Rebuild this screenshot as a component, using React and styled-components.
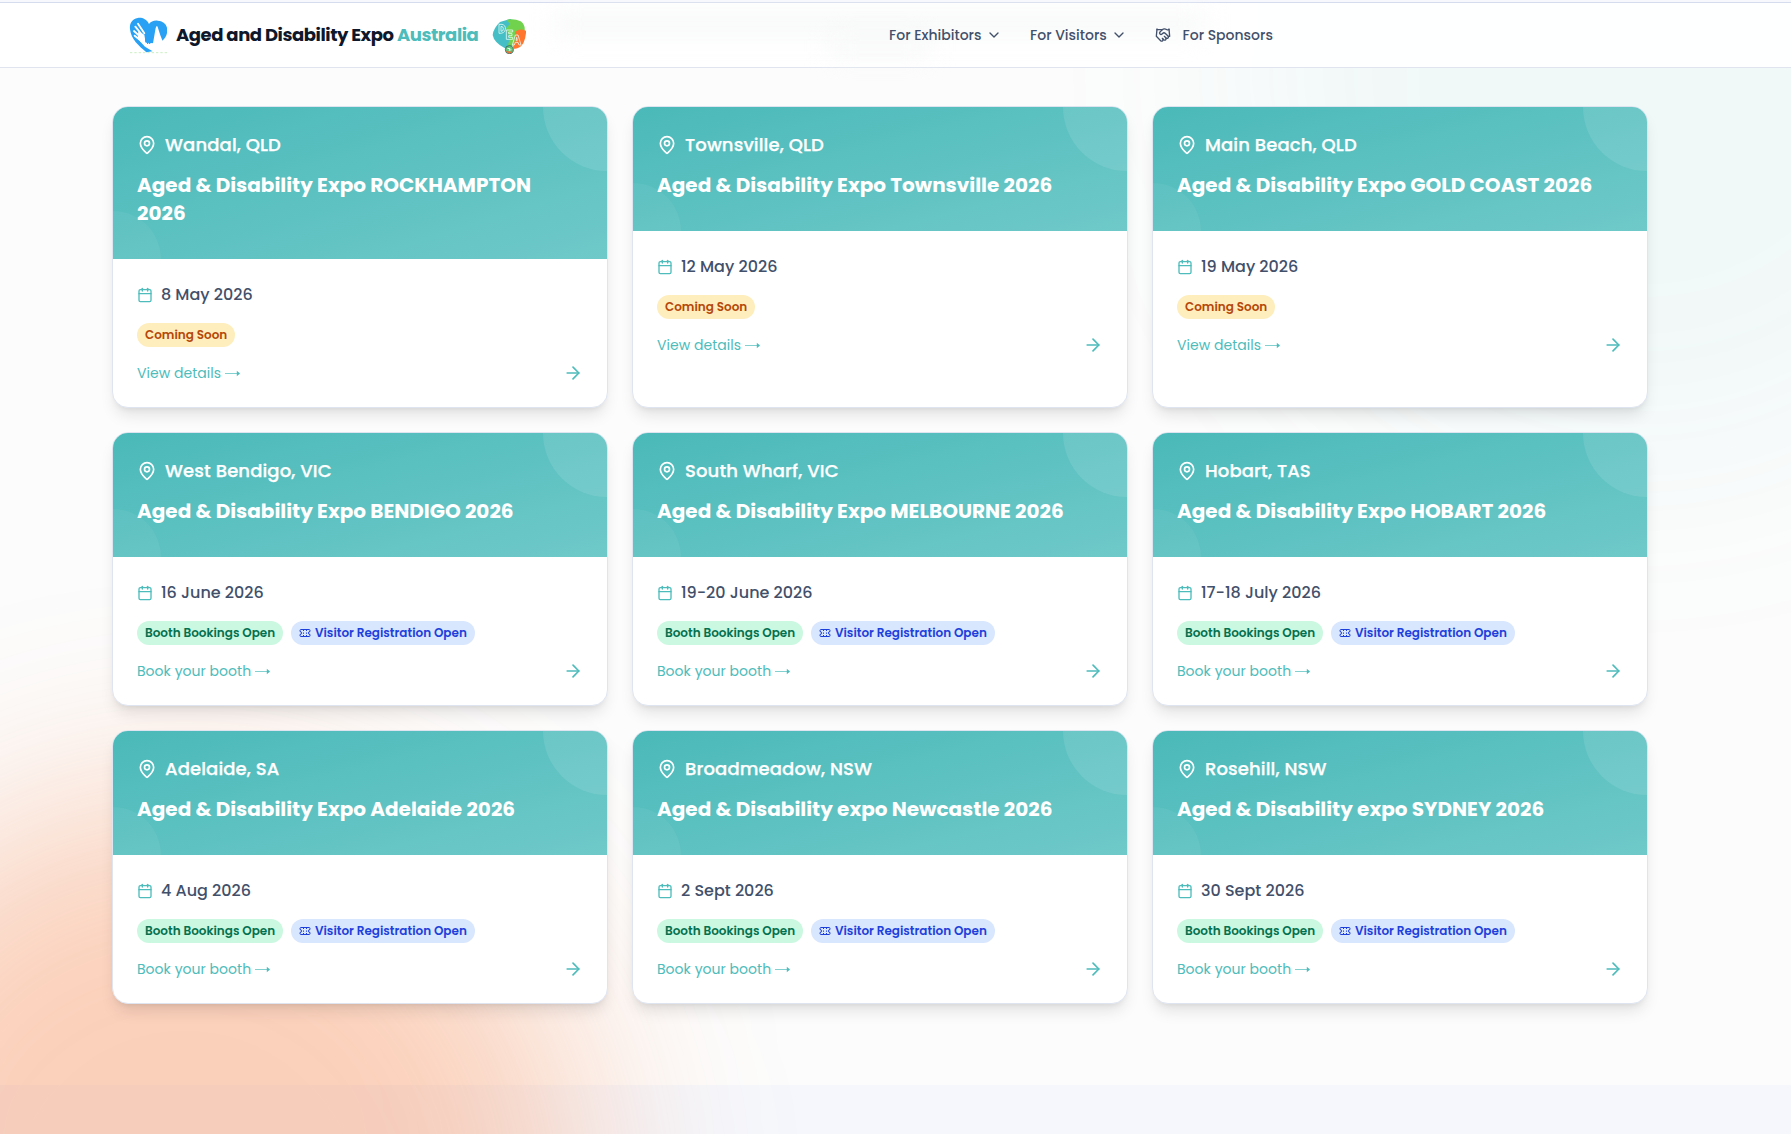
import React from 'react';
import styled, { createGlobalStyle } from 'styled-components';
import { MapPin, Calendar, ArrowRight, ChevronDown, Handshake } from 'lucide-react';

const Global = createGlobalStyle`
  *, *::before, *::after { box-sizing: border-box; }
  html, body { margin: 0; height: 100%; overflow: hidden; }
  body { font-family: Poppins, Inter, "Liberation Sans", sans-serif; background: #fcfcfd; color: #0f172a; }
  h3, p { margin: 0; }
`;

const Page = styled.div`
  position: relative;
  height: 1134px;
  overflow: hidden;
  display: flex;
  flex-direction: column;
  background: #fcfcfc;
`;

const Glow = styled.div`
  position: absolute;
  border-radius: 50%;
  left: ${p => p.$x}px;
  top: ${p => p.$y}px;
  width: 800px;
  height: 800px;
  background: ${p => p.$fill};
  filter: blur(100px);
`;

const TopStrip = styled.div`
  position: relative;
  height: 3px;
  background: #f7f8fe;
  border-bottom: 1px solid #d5dcee;
`;

const Header = styled.header`
  position: relative;
  height: 65px;
  flex: none;
  border-bottom: 1px solid #dfe4ee;
  background: rgba(255, 255, 255, 0.9);
  display: flex;
  align-items: center;
  padding-left: 129px;
`;

const Smudge = styled.div`
  position: absolute;
  left: ${p => p.$x}px;
  top: ${p => p.$y}px;
  width: ${p => p.$w}px;
  height: ${p => p.$h}px;
  background: #f7f8f8;
  filter: blur(12px);
`;

const Brand = styled.div`
  position: relative;
  display: flex;
  align-items: center;
  width: 760px;
`;

const BrandName = styled.span`
  margin-left: 9px;
  width: 316px;
  font-size: 18px;
  line-height: 28px;
  font-weight: 700;
  letter-spacing: -0.45px;
  white-space: nowrap;
  color: #0f172a;
  em { font-style: normal; color: #4dbcbb; }
`;

const Nav = styled.nav`
  position: relative;
  display: flex;
  align-items: center;
  gap: 28px;
`;

const NavItem = styled.a`
  display: flex;
  align-items: center;
  gap: ${p => p.$gap}px;
  font-size: 14px;
  line-height: 20px;
  font-weight: 500;
  color: #42506a;
  white-space: nowrap;
`;

const NavText = styled.span`
  width: ${p => p.$w}px;
`;

const Main = styled.main`
  position: relative;
  z-index: 1;
  flex: 1;
  padding: 38px 0 0 112px;
`;

const Grid = styled.div`
  display: grid;
  grid-template-columns: repeat(3, 1fr);
  gap: 24px;
  width: 1536px;
`;

const Card = styled.article`
  display: flex;
  flex-direction: column;
  border: 1px solid #dfe5f0;
  border-radius: 16px;
  overflow: hidden;
  background: #fff;
  box-shadow: 0 10px 15px -3px rgba(0, 0, 0, 0.1), 0 4px 6px -4px rgba(0, 0, 0, 0.1);
`;

const CardHead = styled.div`
  position: relative;
  overflow: hidden;
  padding: 24px 24px 32px;
  background: linear-gradient(to bottom right, #4bb9b9, #6fc9c9);
  color: #fff;
  &::before {
    content: '';
    position: absolute;
    right: -64px;
    top: -64px;
    width: 128px;
    height: 128px;
    border-radius: 50%;
    background: rgba(255, 255, 255, 0.1);
  }
  &::after {
    content: '';
    position: absolute;
    left: -48px;
    bottom: -48px;
    width: 96px;
    height: 96px;
    border-radius: 50%;
    background: rgba(255, 255, 255, 0.05);
  }
`;

const Place = styled.div`
  display: flex;
  align-items: center;
  gap: 8px;
  font-size: 18px;
  line-height: 28px;
  font-weight: 500;
  letter-spacing: 0.12px;
  -webkit-text-stroke: 0.25px #fff;
`;

const Title = styled.h3`
  margin-top: 12px;
  font-size: 20px;
  line-height: 28px;
  font-weight: 700;
`;

const CardBody = styled.div`
  padding: 24px;
`;

const DateRow = styled.div`
  display: flex;
  align-items: center;
  gap: 8px;
  font-size: 16px;
  line-height: 24px;
  font-weight: 500;
  color: #42506a;
  svg { color: #4dbcbb; }
`;

const Tags = styled.div`
  display: flex;
  gap: 8px;
  margin-top: 16px;
`;

const tones = {
  soon: ['#feeebd', '#b54708'],
  booth: ['#cbf8e0', '#05704f'],
  visitor: ['#d8e6fe', '#1d3fdb'],
};

const Tag = styled.span`
  display: inline-flex;
  align-items: center;
  gap: 4px;
  height: 24px;
  width: ${p => p.$w}px;
  padding: 0 8px;
  border-radius: 12px;
  background: ${p => tones[p.$tone][0]};
  color: ${p => tones[p.$tone][1]};
  font-size: 12px;
  line-height: 16px;
  font-weight: 600;
  white-space: nowrap;
`;

const Foot = styled.div`
  display: flex;
  align-items: center;
  justify-content: space-between;
  margin-top: 16px;
  height: 20px;
  font-size: 14px;
  line-height: 20px;
  font-weight: 400;
  color: #4dbcbb;
`;

const FootText = styled.span`
  display: flex;
  align-items: center;
  gap: 4px;
  letter-spacing: 0.04px;
`;

const BottomBand = styled.div`
  height: 49px;
  flex: none;
  background: #f5f7fc;
`;

const HeartLogo = () => (
  <svg width="38" height="38" viewBox="12 18 114 114">
    <path d="M72 42C64 26 50 22 38 24C20 27 13 42 15 58C18 88 42 108 64 127L82 124L78 116L84 100L112 92C122 84 127 72 127 60C126 42 114 33 98 32C86 31 77 35 72 42Z" fill="#28a1f5" />
    <path d="M40 64L58 74L62 98L88 100L112 90L102 110L80 122L60 110L38 86Z" fill="#fff" />
    <path d="M39 41L58 70M31 50L54 78M27 63L52 86M29 77L50 94" stroke="#fff" strokeWidth="5.500" strokeLinecap="round" />
    <path d="M84 100L92 54Q96 42 99 54L106 76L113 94L100 110Z" fill="#fff" />
    <path d="M62 74V95M68 74V102M74 74V102M80 72V98" stroke="#28a1f5" strokeWidth="3.600" />
    <path d="M15 128H126" stroke="#ccefc4" strokeWidth="3" strokeDasharray="7 6" />
  </svg>
);

const AustraliaLogo = () => (
  <svg width="34" height="38" viewBox="36 48 102 114">
    <path d="M90 57L60 66Q40 85 38 105Q42 128 75 145L94 140V57Z" fill="#45bec5" />
    <path d="M80 60Q100 54 122 64Q136 74 134 92L118 95L106 130L92 142L84 135L90 115L78 85L90 72Z" fill="#71d34d" />
    <path d="M106 95Q118 84 138 92Q139 110 130 130Q118 148 102 146Q96 140 104 125Z" fill="#ff762f" />
    <g fill="none" stroke="#e6fdf4" strokeWidth="2.400">
      <path d="M57 73H66Q78 76 76 88Q74 101 57 100ZM63 79V94Q71 94 70 86Q70 79 63 79" />
      <path d="M79 90H98V96H86V101H96V107H86V112H98V118H79Z" />
      <path d="M97 135L106 105H114L123 135H117L114 127H106L103 135ZM108 121H112L110 112Z" />
    </g>
    <circle cx="88" cy="149" r="12" fill="#5cc878" stroke="#3b5f60" strokeWidth="2.500" />
    <path d="M77 152Q88 169 99 151L90 155Z" fill="#f36b38" />
    <path d="M82 145L90 146L87 151L94 149" stroke="#fff" strokeWidth="2.500" fill="none" />
  </svg>
);

const TicketIcon = () => (
  <svg width="12" height="12" viewBox="0 0 24 24" fill="none" stroke="currentColor" strokeWidth="2" strokeLinejoin="round">
    <path d="M2 9a3 3 0 0 1 0 6v2a2 2 0 0 0 2 2h16a2 2 0 0 0 2-2v-2a3 3 0 0 1 0-6V7a2 2 0 0 0-2-2H4a2 2 0 0 0-2 2Z" />
    <path d="M9 5v3M9 11v2.500M9 16v3M15 5v3M15 11v2.500M15 16v3" />
  </svg>
);

const LongArrow = () => (
  <svg width="15" height="8" viewBox="0 0 15 8">
    <path d="M0 4.500H12.500" stroke="#4dbcbb" strokeWidth=".7" />
    <path d="M11.800 1.800L15 4.500L11.800 7.200Z" fill="#4dbcbb" />
  </svg>
);

const events = [
  ['Wandal, QLD', 'Aged & Disability Expo ROCKHAMPTON 2026', '8 May 2026', false],
  ['Townsville, QLD', 'Aged & Disability Expo Townsville 2026', '12 May 2026', false],
  ['Main Beach, QLD', 'Aged & Disability Expo GOLD COAST 2026', '19 May 2026', false],
  ['West Bendigo, VIC', 'Aged & Disability Expo BENDIGO 2026', '16 June 2026', true],
  ['South Wharf, VIC', 'Aged & Disability Expo MELBOURNE 2026', '19-20 June 2026', true],
  ['Hobart, TAS', 'Aged & Disability Expo HOBART 2026', '17-18 July 2026', true],
  ['Adelaide, SA', 'Aged & Disability Expo Adelaide 2026', '4 Aug 2026', true],
  ['Broadmeadow, NSW', 'Aged & Disability expo Newcastle 2026', '2 Sept 2026', true],
  ['Rosehill, NSW', 'Aged & Disability expo SYDNEY 2026', '30 Sept 2026', true],
];

const EventCard = ({ place, title, date, open }) => (
  <Card>
    <CardHead>
      <Place><MapPin size={20} />{place}</Place>
      <Title>{title}</Title>
    </CardHead>
    <CardBody>
      <DateRow><Calendar size={16} />{date}</DateRow>
      <Tags>
        {open ? (
          <>
            <Tag $tone="booth" $w={146}>Booth Bookings Open</Tag>
            <Tag $tone="visitor" $w={184}><TicketIcon />Visitor Registration Open</Tag>
          </>
        ) : <Tag $tone="soon" $w={98}>Coming Soon</Tag>}
      </Tags>
      <Foot>
        <FootText>{open ? 'Book your booth' : 'View details'}<LongArrow /></FootText>
        <ArrowRight size={20} />
      </Foot>
    </CardBody>
  </Card>
);

export default function App() {
  return (
    <Page>
      <Global />
      <Glow $x={1240} $y={-330} $fill="rgba(70,180,190,.06)" />
      <TopStrip />
      <Header>
        <Smudge $x={555} $y={10} $w={650} $h={22} />
        <Smudge $x={830} $y={34} $w={100} $h={18} />
        <Brand>
          <HeartLogo />
          <BrandName>Aged and Disability Expo <em>Australia</em></BrandName>
          <AustraliaLogo />
        </Brand>
        <Nav>
          <NavItem $gap={4}><NavText $w={93}>For Exhibitors</NavText><ChevronDown size={16} /></NavItem>
          <NavItem $gap={4}><NavText $w={77}>For Visitors</NavText><ChevronDown size={16} /></NavItem>
          <NavItem $gap={11.5}><Handshake size={16} /><NavText $w={92}>For Sponsors</NavText></NavItem>
        </Nav>
      </Header>
      <Main>
        <Grid>
          {events.map(([place, title, date, open]) => (
            <EventCard key={title} place={place} title={title} date={date} open={open} />
          ))}
        </Grid>
      </Main>
      <BottomBand />
      <Glow $x={-215} $y={795} $fill="rgba(249,117,50,.325)" />
    </Page>
  );
}
